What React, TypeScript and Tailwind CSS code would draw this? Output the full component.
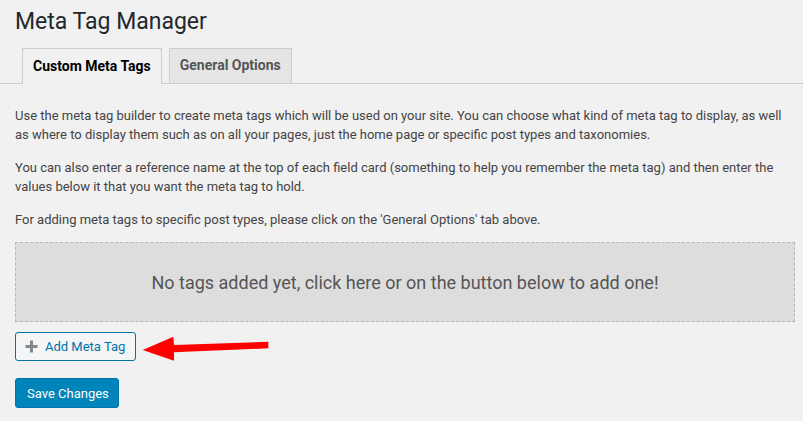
import React from "react";

export default function App() {
  return (
    <div className="relative min-h-[421px] w-[803px] overflow-hidden bg-[#f1f1f1] font-['Roboto',sans-serif] text-[#444]">
      <h1 className="pl-[15px] pt-[7px] text-[23px] leading-[1.3] font-normal text-[#23282d]">
        Meta Tag Manager
      </h1>
      <nav className="mt-[11px] flex h-[36px] gap-[7px] border-b border-[#ccc] pl-[22px]">
        <div className="-mb-px flex h-[36px] items-center border border-b-0 border-[#ccc] bg-[#f1f1f1] px-[10px] text-[14px] font-bold text-black">
          Custom Meta Tags
        </div>
        <div className="flex h-[35px] items-center border border-b-0 border-[#ccc] bg-[#e5e5e5] px-[10px] text-[14px] font-bold text-[#555]">
          General Options
        </div>
      </nav>
      <div className="pl-[15px] pr-[8px]">
        <p className="mt-[22px] text-[13px] leading-[19.5px]">
          Use the meta tag builder to create meta tags which will be used on your site. You can choose what kind of meta tag to display, as well as where to display them such as on all your pages, just the home page or specific post types and taxonomies.
        </p>
        <p className="mt-[13px] text-[13px] leading-[19.5px]">
          You can also enter a reference name at the top of each field card (something to help you remember the meta tag) and then enter the values below it that you want the meta tag to hold.
        </p>
        <p className="mt-[13px] text-[13px] leading-[19.5px]">
          For adding meta tags to specific post types, please click on the 'General Options' tab above.
        </p>
        <div className="mt-[13px] flex h-[80px] items-center justify-center border border-dashed border-[#b4b9be] bg-[#dddddd] text-[18px] text-[#555]">
          No tags added yet, click here or on the button below to add one!
        </div>
        <button className="mt-[10px] flex h-[29px] w-[121px] items-center rounded-[3px] border border-[#0073aa] bg-[#f3f5f6] pl-[9px] text-[13px] text-[#0073aa]">
          <svg width="13" height="13" viewBox="0 0 13 13" className="mr-[7px]">
            <rect x="5" y="0.5" width="3" height="12" fill="#82878c" />
            <rect x="0.5" y="5" width="12" height="3" fill="#82878c" />
          </svg>
          Add Meta Tag
        </button>
        <button className="mt-[17px] flex h-[30px] w-[104px] items-center rounded-[3px] border border-[#0073aa] bg-[#0085ba] pl-[11px] text-[13px] text-white">
          Save Changes
        </button>
      </div>
      <svg className="absolute left-[140px] top-[330px]" width="135" height="40" viewBox="0 0 135 40">
        <polygon
          points="2.7,20 33.3,6.7 34,15 128.3,11.7 128.3,18.3 34,22.3 34,30.7"
          fill="#ff0000"
        />
      </svg>
    </div>
  );
}
